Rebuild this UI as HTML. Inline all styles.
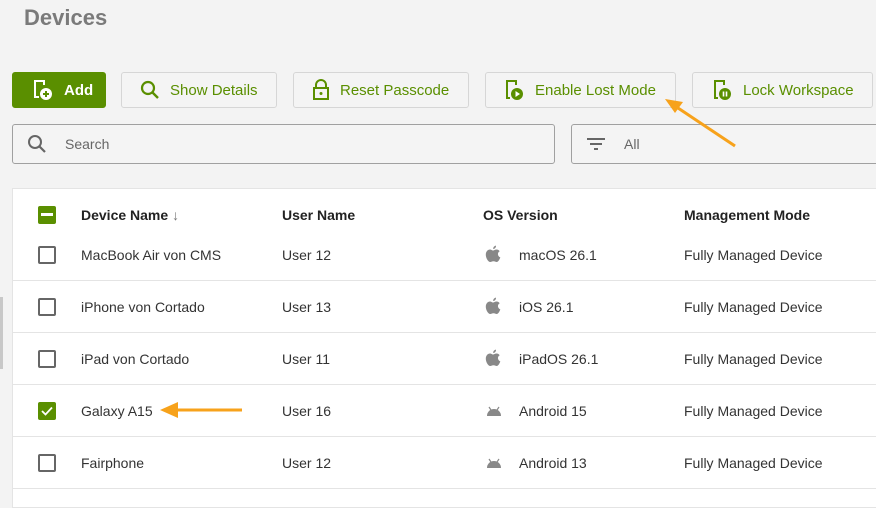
<!DOCTYPE html>
<html><head><meta charset="utf-8"><style>
*{box-sizing:border-box;margin:0;padding:0}
body{width:876px;height:491px;overflow:hidden;background:#f3f3f3;font-family:"Liberation Sans",sans-serif;position:relative}
.t{position:absolute;left:24px;top:5px;font-size:22px;font-weight:bold;color:#7a7a7a}
.b{position:absolute;top:72px;height:36px;border:1px solid #d6d6d6;border-radius:3px;background:#f4f4f4;color:#5a8f00;font-size:15px;display:flex;align-items:center}
.b svg{margin-right:10px}
.add{background:#5a8f00;border-color:#5a8f00;color:#fff;font-weight:bold}
.in{position:absolute;top:124px;height:40px;border:1px solid #a0a0a0;border-radius:3px;background:#f4f4f4;color:#666;font-size:14px;display:flex;align-items:center}
.card{position:absolute;left:12px;top:188px;width:900px;height:320px;background:#fff;border:1px solid #e4e4e4}
.r{position:absolute;left:0;width:900px;height:52px;border-bottom:1px solid #e4e4e4;font-size:14px;color:#333}
.r span{position:absolute;top:50%;transform:translateY(-50%)}
.h{font-weight:bold;color:#222;border:none}
.cb{position:absolute;left:25px;top:50%;margin-top:-9px;width:18px;height:18px;border:2px solid #666;border-radius:2px}
.ap{position:absolute;left:472px;top:16px}
</style></head><body>
<div style="position:absolute;left:0;top:297px;width:3px;height:72px;background:#c8c8c8"></div>
<div class="t">Devices</div>
<div class="b add" style="left:12px;width:94px;padding-left:19px"><svg width="22" height="22" viewBox="0 0 22 22"><path d="M7 2H3v16h4M7 2h5v4" fill="none" stroke="#fff" stroke-width="2"/><circle cx="14" cy="15" r="6" fill="#fff"/><path d="M14 12v6M11 15h6" stroke="#5a8f00" stroke-width="2"/></svg>Add</div>
<div class="b" style="left:121px;width:156px;padding-left:18px"><svg width="20" height="20" viewBox="0 0 20 20"><circle cx="8" cy="8" r="6" fill="none" stroke="#5a8f00" stroke-width="2.2"/><path d="M12.5 12.5L18 18" stroke="#5a8f00" stroke-width="2.4"/></svg>Show Details</div>
<div class="b" style="left:293px;width:176px;padding-left:18px"><svg width="18" height="22" viewBox="0 0 18 22"><path d="M4 9V6a5 5 0 0110 0v3" fill="none" stroke="#5a8f00" stroke-width="2"/><rect x="2" y="9" width="14" height="11" fill="none" stroke="#5a8f00" stroke-width="2"/><circle cx="9" cy="14.5" r="1.5" fill="#5a8f00"/></svg>Reset Passcode</div>
<div class="b" style="left:485px;width:191px;padding-left:19px"><svg width="20" height="22" viewBox="0 0 20 22"><path d="M6 2H2v17h3M6 2h5v4" fill="none" stroke="#5a8f00" stroke-width="2"/><circle cx="12" cy="15" r="6" fill="#5a8f00"/><path d="M10.5 12v6l4.5-3z" fill="#fff"/></svg>Enable Lost Mode</div>
<div class="b" style="left:692px;width:181px;padding-left:20px"><svg width="20" height="22" viewBox="0 0 20 22"><path d="M6 2H2v17h3M6 2h5v4" fill="none" stroke="#5a8f00" stroke-width="2"/><circle cx="12" cy="15" r="6" fill="#5a8f00"/><path d="M10.5 12.5v5M13.5 12.5v5" stroke="#fff" stroke-width="1.6"/></svg>Lock Workspace</div>
<div class="in" style="left:12px;width:543px;padding-left:14px"><svg width="20" height="20" viewBox="0 0 20 20" style="margin-right:18px"><circle cx="8" cy="8" r="6" fill="none" stroke="#666" stroke-width="2"/><path d="M12.5 12.5L18 18" stroke="#666" stroke-width="2.2"/></svg>Search</div>
<div class="in" style="left:571px;width:320px;padding-left:14px"><svg width="20" height="16" viewBox="0 0 20 16" style="margin-right:18px"><path d="M1 3h18M4 8h12M8 13h4" stroke="#666" stroke-width="2"/></svg>All</div>
<svg style="position:absolute;left:0;top:0" width="876" height="491"><path d="M735 146L672 104" stroke="#f7a21b" stroke-width="3"/><path d="M665 99l18 3-8 11z" fill="#f7a21b"/></svg>
<div class="card">
<div class="r h" style="top:1px;height:50px;border:none"><div class="cb" style="border:none;background:#5a8f00"><div style="position:absolute;left:3px;right:3px;top:7px;height:2.5px;background:#fff"></div></div><span style="left:68px">Device Name <span style="position:static;transform:none;color:#777;font-weight:normal">↓</span></span><span style="left:269px">User Name</span><span style="left:470px">OS Version</span><span style="left:671px">Management Mode</span></div>
<div class="r" style="top:40px"><div class="cb"></div><span style="left:68px">MacBook Air von CMS</span><span style="left:269px">User 12</span><svg class="ap" width="16" height="19" viewBox="0 0 16 19"><path d="M8 5.5C9 5.5 10 4.5 11.5 4.5c1.5 0 2.6.8 3.2 1.8-2.6 1.4-2.2 5 .6 6.1-.6 1.8-2 4.6-3.6 4.6-1.2 0-1.6-.7-3.2-.7s-2.1.7-3.2.7C3.2 17 .8 13 .8 9.7.8 6.4 2.9 4.5 5 4.5 6.3 4.5 7 5.5 8 5.5z" fill="#888"/><path d="M8.2 4C8 2.3 9.3.8 11 .6c.2 1.8-1.3 3.3-2.8 3.4z" fill="#888"/></svg><span style="left:506px">macOS 26.1</span><span style="left:671px">Fully Managed Device</span></div>
<div class="r" style="top:92px"><div class="cb"></div><span style="left:68px">iPhone von Cortado</span><span style="left:269px">User 13</span><svg class="ap" width="16" height="19" viewBox="0 0 16 19"><path d="M8 5.5C9 5.5 10 4.5 11.5 4.5c1.5 0 2.6.8 3.2 1.8-2.6 1.4-2.2 5 .6 6.1-.6 1.8-2 4.6-3.6 4.6-1.2 0-1.600-.7-3.2-.7s-2.1.7-3.2.7C3.2 17 .8 13 .8 9.7.8 6.4 2.9 4.5 5 4.5 6.3 4.5 7 5.5 8 5.5z" fill="#888"/><path d="M8.2 4C8 2.3 9.3.8 11 .6c.2 1.8-1.3 3.3-2.8 3.4z" fill="#888"/></svg><span style="left:506px">iOS 26.1</span><span style="left:671px">Fully Managed Device</span></div>
<div class="r" style="top:144px"><div class="cb"></div><span style="left:68px">iPad von Cortado</span><span style="left:269px">User 11</span><svg class="ap" width="16" height="19" viewBox="0 0 16 19"><path d="M8 5.5C9 5.5 10 4.5 11.5 4.5c1.5 0 2.6.8 3.2 1.8-2.6 1.4-2.2 5 .6 6.1-.6 1.8-2 4.6-3.6 4.6-1.2 0-1.6-.7-3.2-.7s-2.1.7-3.2.7C3.2 17 .8 13 .8 9.7.8 6.4 2.9 4.5 5 4.5 6.3 4.5 7 5.5 8 5.5z" fill="#888"/><path d="M8.2 4C8 2.3 9.3.8 11 .6c.2 1.8-1.3 3.3-2.8 3.4z" fill="#888"/></svg><span style="left:506px">iPadOS 26.1</span><span style="left:671px">Fully Managed Device</span></div>
<div class="r" style="top:196px"><div class="cb" style="border:none;background:#5a8f00"><svg width="18" height="18" viewBox="0 0 18 18"><path d="M4 9l3.5 3.5L14 5.5" fill="none" stroke="#fff" stroke-width="1.8"/></svg></div><span style="left:68px">Galaxy A15</span><span style="left:269px">User 16</span><svg style="position:absolute;left:472px;top:19px" width="18" height="14" viewBox="0 0 18 14"><path d="M2 12a7 7 0 0114 0z" fill="#888"/><path d="M4 3l2 3M14 3l-2 3" stroke="#888" stroke-width="1.2"/></svg><span style="left:506px">Android 15</span><span style="left:671px">Fully Managed Device</span></div>
<div class="r" style="top:248px"><div class="cb"></div><span style="left:68px">Fairphone</span><span style="left:269px">User 12</span><svg style="position:absolute;left:472px;top:19px" width="18" height="14" viewBox="0 0 18 14"><path d="M2 12a7 7 0 0114 0z" fill="#888"/><path d="M4 3l2 3M14 3l-2 3" stroke="#888" stroke-width="1.2"/></svg><span style="left:506px">Android 13</span><span style="left:671px">Fully Managed Device</span></div>
</div>
<svg style="position:absolute;left:0;top:0" width="876" height="491"><path d="M242 410H172" stroke="#f7a21b" stroke-width="3"/><path d="M160 410l18-8v16z" fill="#f7a21b"/></svg>
</body></html>
